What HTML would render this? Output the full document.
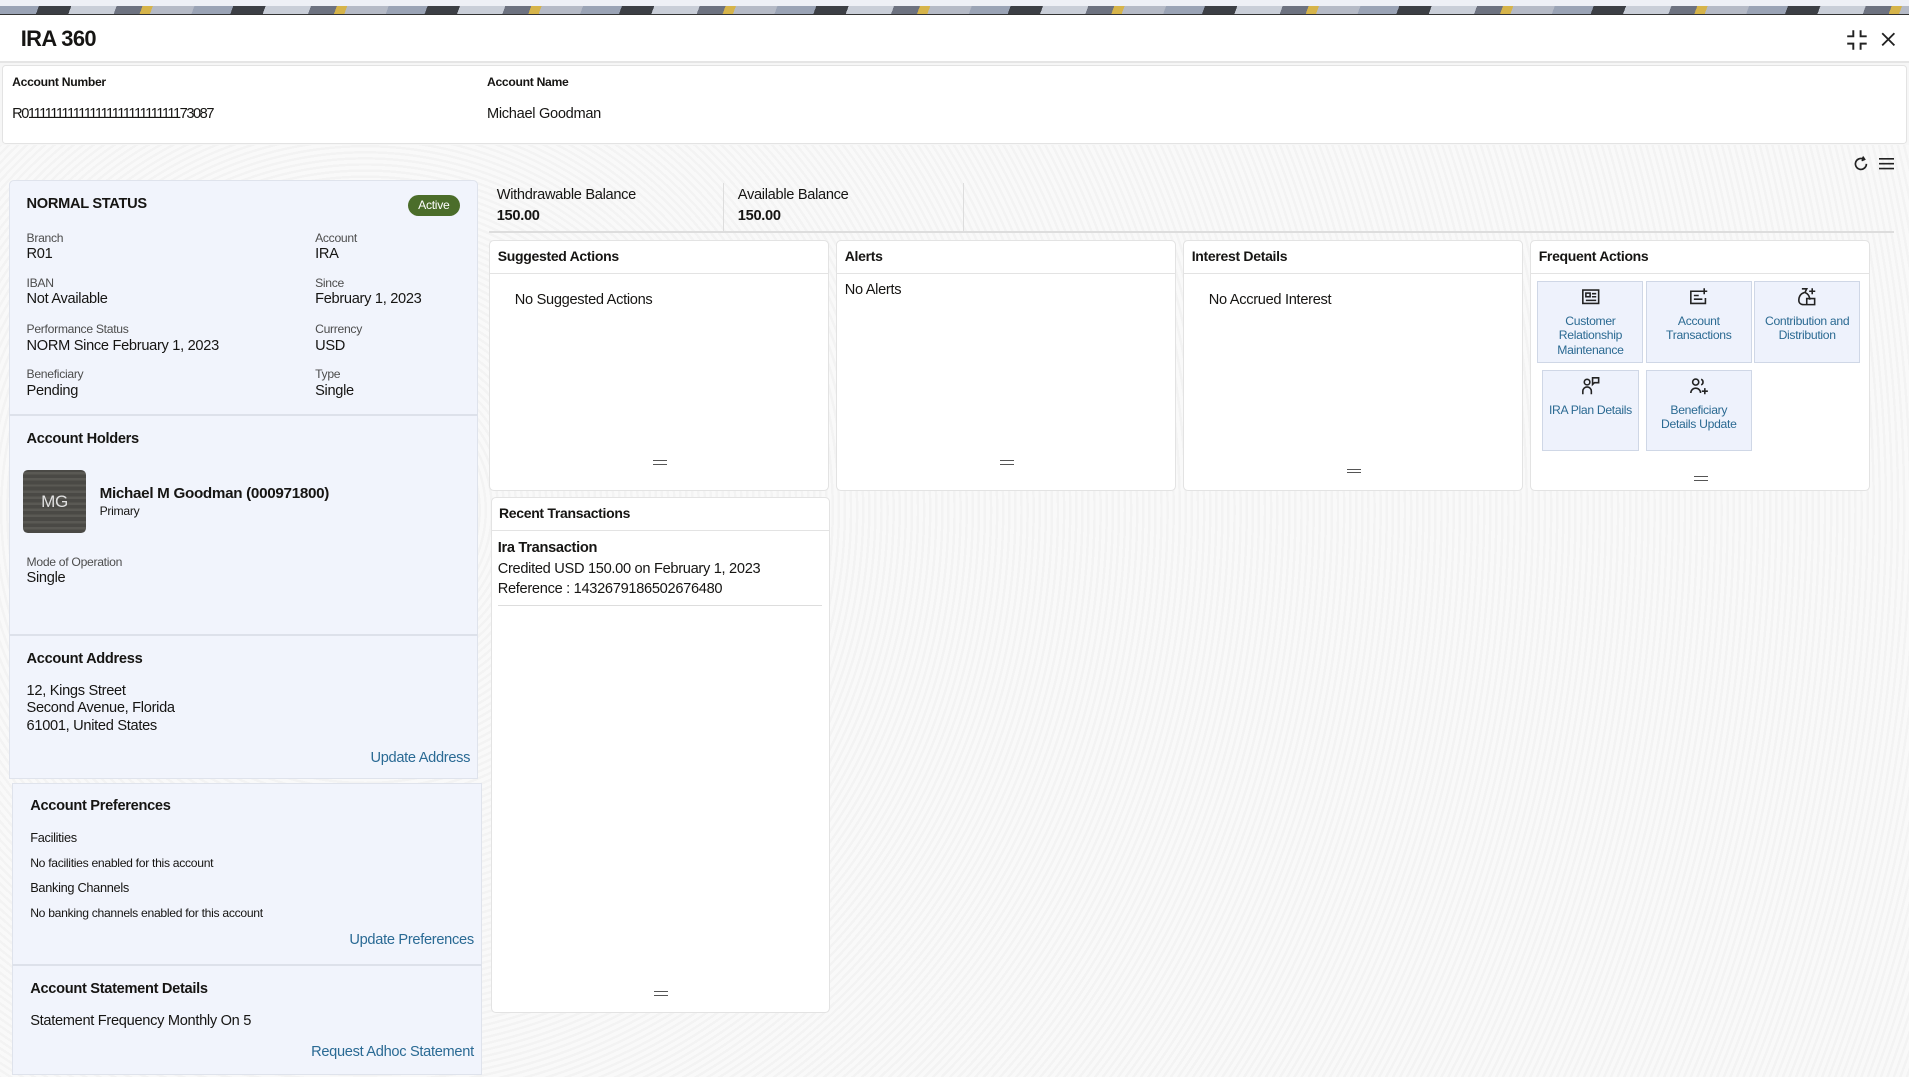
<!DOCTYPE html>
<html><head><meta charset="utf-8"><style>
*{box-sizing:border-box;margin:0;padding:0}
html,body{width:1909px;height:1077px;overflow:hidden;background:#f6f6f6}
#w{position:absolute;left:0;top:0;width:1568px;height:885px;zoom:1.2175;font-family:"Liberation Sans",sans-serif;color:#161513;font-size:11.5px;letter-spacing:-0.25px}
.a{position:absolute}
.card{position:absolute;background:#fff;border:1px solid #e3e3e3;border-radius:4px}
.card .h{height:27px;border-bottom:1px solid #e3e3e3;padding:6px 6px;font-weight:bold;font-size:11.5px}
.grip{position:absolute;left:50%;width:11px;height:4px;margin-left:-5px;border-top:1px solid #555;border-bottom:1px solid #555}
.sec{position:absolute;background:#f1f4fc;border:1px solid #dfe3ec}
.lbl{font-size:10px;color:#4d4d4d}
.val{font-size:12px;margin-top:1px}
.st{font-weight:bold;font-size:12px}
.lnk{color:#2a6a94;font-size:12px;position:absolute;right:6px}
.tile{position:absolute;background:#eef2fc;border:1px solid #cfd7e6;color:#2b6a92;font-size:10px;text-align:center;line-height:12px;padding-top:26px}
.tile svg{position:absolute;left:50%;top:4px;margin-left:-8px}
</style></head><body><div id="w">
<div class="a" style="left:0;top:0;width:1568px;height:5px;background:#eef0f6"></div>
<div class="a" style="left:0;top:5px;width:1568px;height:7px;background:repeating-linear-gradient(110deg,#9aa3b5 0 30px,#3c3f45 30px 55px,#c9ced8 55px 90px,#6d7280 90px 110px,#d6b44a 110px 118px,#b5bac6 118px 150px);border-bottom:1px solid #333"></div>
<div class="a" style="left:0;top:12px;width:1568px;height:40px;background:#fff;border-bottom:2px solid #e5e5e5"></div>
<div class="a" style="left:17px;top:21px;font-size:18px;font-weight:bold;letter-spacing:-0.5px">IRA 360</div>
<svg class="a" style="left:1516px;top:24px" width="18" height="18" viewBox="0 0 18 18" fill="none" stroke="#222" stroke-width="1.6"><path d="M6 1v5H1M12 1v5h5M6 17v-5H1M12 17v-5h5"/></svg>
<svg class="a" style="left:1545px;top:26px" width="12" height="12" viewBox="0 0 12 12" stroke="#222" stroke-width="1.5"><path d="M1 1l10 10M11 1L1 11"/></svg>
<div class="a" style="left:2px;top:53px;width:1564px;height:65px;background:#fff;border:1px solid #e3e3e3;border-radius:3px"></div>
<div class="a" style="left:10px;top:62px;font-size:10px;font-weight:bold">Account Number</div>
<div class="a" style="left:10px;top:87px;font-size:12px;letter-spacing:-1.2px">R011111111111111111111111111173087</div>
<div class="a" style="left:400px;top:62px;font-size:10px;font-weight:bold">Account Name</div>
<div class="a" style="left:400px;top:87px;font-size:12px">Michael Goodman</div>
<div class="a" style="left:0;top:119px;width:1568px;height:766px;background:repeating-radial-gradient(circle at 300px 300px,#f9f9f9 0 3px,#f3f3f3 3px 5px)"></div>
<svg class="a" style="left:1522px;top:128px" width="13" height="13" viewBox="0 0 13 13" fill="none" stroke="#222" stroke-width="1.4"><path d="M11 6.5A4.5 4.5 0 1 1 8.5 2.5"/><path d="M8 0.5l1.5 2.3-2.4 1" /></svg>
<svg class="a" style="left:1543px;top:129px" width="13" height="11" viewBox="0 0 13 11" stroke="#222" stroke-width="1.3"><path d="M0 1.5h13M0 5.5h13M0 9.5h13"/></svg>

<div class="sec" style="left:7px;top:148px;width:386px;height:193px;border-radius:4px 4px 0 0">
 <div class="a st" style="left:14px;top:12px">NORMAL STATUS</div>
 <div class="a" style="left:327px;top:11px;width:43px;height:18px;border-radius:9px;background:#4b6d2a;color:#fff;font-size:10px;text-align:center;line-height:18px">Active</div>
 <div class="a" style="left:14px;top:41px"><div class="lbl">Branch</div><div class="val">R01</div></div>
 <div class="a" style="left:251px;top:41px"><div class="lbl">Account</div><div class="val">IRA</div></div>
 <div class="a" style="left:14px;top:78px"><div class="lbl">IBAN</div><div class="val">Not Available</div></div>
 <div class="a" style="left:251px;top:78px"><div class="lbl">Since</div><div class="val">February 1, 2023</div></div>
 <div class="a" style="left:14px;top:116px"><div class="lbl">Performance Status</div><div class="val">NORM Since February 1, 2023</div></div>
 <div class="a" style="left:251px;top:116px"><div class="lbl">Currency</div><div class="val">USD</div></div>
 <div class="a" style="left:14px;top:153px"><div class="lbl">Beneficiary</div><div class="val">Pending</div></div>
 <div class="a" style="left:251px;top:153px"><div class="lbl">Type</div><div class="val">Single</div></div>
</div>
<div class="sec" style="left:7px;top:340px;width:386px;height:182px;border-top:2px solid #dde1ea">
 <div class="a st" style="left:14px;top:12px">Account Holders</div>
 <div class="a" style="left:11px;top:44px;width:52px;height:52px;border-radius:4px;background:repeating-linear-gradient(0deg,#4a4945 0 3px,#5a5954 3px 5px);color:#e0e0e0;font-size:14px;text-align:center;line-height:52px">MG</div>
 <div class="a" style="left:74px;top:57px;font-weight:bold;font-size:12.5px">Michael M Goodman (000971800)</div>
 <div class="a" style="left:74px;top:72px;font-size:10px">Primary</div>
 <div class="a" style="left:14px;top:114px"><div class="lbl">Mode of Operation</div><div class="val">Single</div></div>
</div>
<div class="sec" style="left:7px;top:521px;width:386px;height:119px;border-top:2px solid #dde1ea">
 <div class="a st" style="left:14px;top:12px">Account Address</div>
 <div class="a" style="left:14px;top:38px;font-size:12px;line-height:14.5px">12, Kings Street<br>Second Avenue, Florida<br>61001, United States</div>
 <div class="lnk" style="top:93px">Update Address</div>
</div>
<div class="sec" style="left:10px;top:643px;width:386px;height:150px">
 <div class="a st" style="left:14px;top:12px">Account Preferences</div>
 <div class="a" style="left:14px;top:38px;font-size:10.5px">Facilities</div>
 <div class="a" style="left:14px;top:59px;font-size:10px">No facilities enabled for this account</div>
 <div class="a" style="left:14px;top:79px;font-size:10.5px">Banking Channels</div>
 <div class="a" style="left:14px;top:100px;font-size:10px">No banking channels enabled for this account</div>
 <div class="lnk" style="top:122px">Update Preferences</div>
</div>
<div class="sec" style="left:10px;top:792px;width:386px;height:91px;border-top:2px solid #dde1ea">
 <div class="a st" style="left:14px;top:12px">Account Statement Details</div>
 <div class="a" style="left:14px;top:38px;font-size:12px">Statement Frequency Monthly On 5</div>
 <div class="lnk" style="top:64px">Request Adhoc Statement</div>
</div>

<div class="a" style="left:408px;top:154px;font-size:12px">Withdrawable Balance</div>
<div class="a" style="left:408px;top:171px;font-size:12px;font-weight:bold">150.00</div>
<div class="a" style="left:594px;top:150px;width:1px;height:40px;background:#ddd"></div>
<div class="a" style="left:606px;top:154px;font-size:12px">Available Balance</div>
<div class="a" style="left:606px;top:171px;font-size:12px;font-weight:bold">150.00</div>
<div class="a" style="left:791px;top:150px;width:1px;height:40px;background:#ddd"></div>
<div class="a" style="left:402px;top:190px;width:1154px;height:1px;background:#ddd"></div>

<div class="card" style="left:402px;top:197px;width:279px;height:206px"><div class="h">Suggested Actions</div>
 <div class="a" style="left:20px;top:42px;font-size:12px">No Suggested Actions</div><div class="grip" style="top:180px"></div></div>
<div class="card" style="left:687px;top:197px;width:279px;height:206px"><div class="h">Alerts</div>
 <div class="a" style="left:6px;top:34px;font-size:12px">No Alerts</div><div class="grip" style="top:180px"></div></div>
<div class="card" style="left:972px;top:197px;width:279px;height:206px"><div class="h">Interest Details</div>
 <div class="a" style="left:20px;top:42px;font-size:12px">No Accrued Interest</div><div class="grip" style="top:187px"></div></div>
<div class="card" style="left:1257px;top:197px;width:279px;height:206px"><div class="h">Frequent Actions</div>
 <div class="tile" style="left:5px;top:33px;width:87px;height:67px"><svg width="16" height="16" viewBox="0 0 16 16" fill="none" stroke="#222" stroke-width="1.3"><rect x="1.5" y="2.5" width="13" height="11"/><rect x="4" y="5" width="3.5" height="3"/><path d="M9 5.5h3.5M9 8h3.5M4 11h8.5"/></svg>Customer<br>Relationship<br>Maintenance</div>
 <div class="tile" style="left:94px;top:33px;width:87px;height:67px"><svg width="16" height="16" viewBox="0 0 16 16" fill="none" stroke="#222" stroke-width="1.3"><path d="M10 3.5H1.5v10h12V9M4 7h4M4 10h7M12.5 1v5M10 3.5h5"/></svg>Account<br>Transactions</div>
 <div class="tile" style="left:183px;top:33px;width:87px;height:67px"><svg width="16" height="16" viewBox="0 0 16 16" fill="none" stroke="#222" stroke-width="1.3"><path d="M4 1.5h4L6.5 4.5c3 1 4 4 4 6M6 4.5C3 5.5 1.5 8 1.5 11c0 2 1.5 3.5 4 3.5h5M8 9.5h6.5v5H8zM12.5 1v5M10 3.5h5"/></svg>Contribution and<br>Distribution</div>
 <div class="tile" style="left:9px;top:106px;width:79px;height:67px"><svg width="16" height="16" viewBox="0 0 16 16" fill="none" stroke="#222" stroke-width="1.3"><circle cx="5" cy="5" r="2.3"/><path d="M1.5 15v-2.5a3.5 3.5 0 0 1 7 0V15M9.5 1.5h5v4h-3.5l-1.5 1.5z"/></svg>IRA Plan Details</div>
 <div class="tile" style="left:94px;top:106px;width:87px;height:67px"><svg width="16" height="16" viewBox="0 0 16 16" fill="none" stroke="#222" stroke-width="1.3"><circle cx="5.5" cy="5" r="2.5"/><path d="M1.5 14a4 4 0 0 1 8 0M10 2.7a2.5 2.5 0 0 1 0 4.6M13 10v5M10.5 12.5h5"/></svg>Beneficiary<br>Details Update</div>
 <div class="grip" style="top:193px"></div></div>

<div class="card" style="left:403px;top:408px;width:279px;height:424px"><div class="h">Recent Transactions</div>
 <div class="a" style="left:5px;top:33px;width:266px;border-bottom:1px solid #ddd;padding-bottom:4px;font-size:12px;line-height:17px"><b>Ira Transaction</b><br>Credited USD 150.00 on February 1, 2023<br>Reference : 1432679186502676480</div>
 <div class="grip" style="top:405px"></div></div>
</div></body></html>
